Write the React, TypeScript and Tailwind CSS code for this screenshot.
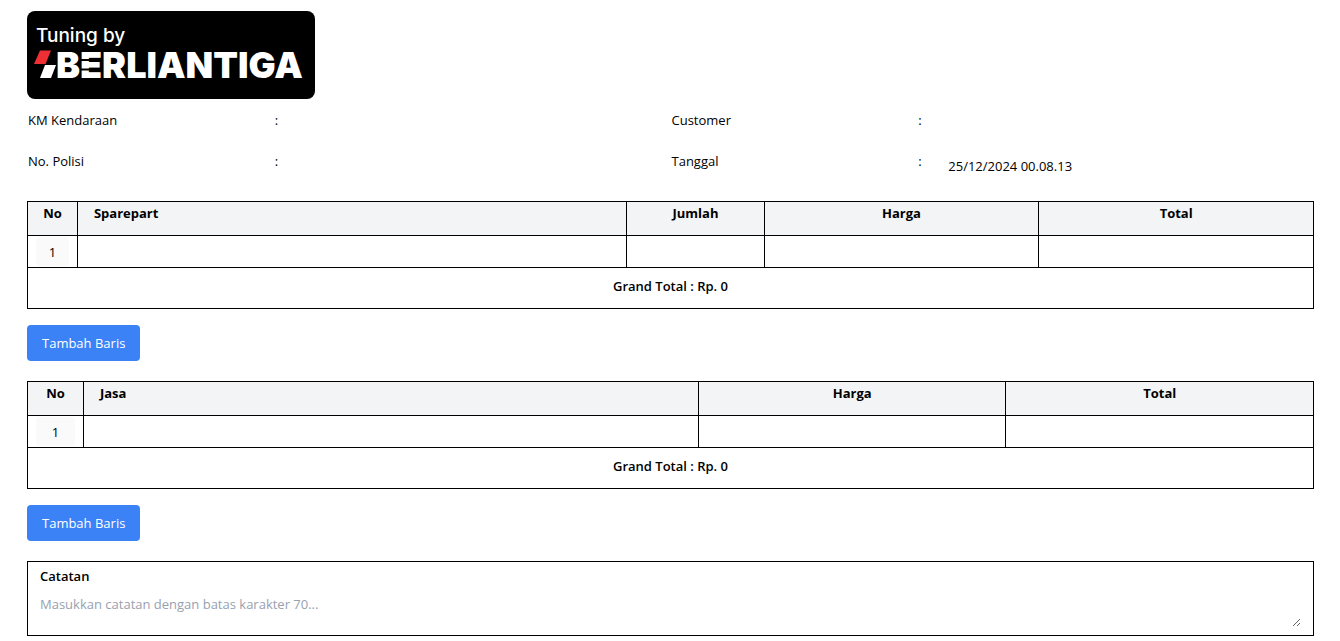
import { useState } from 'react';

type Column = { label: string; width: string; align: string };

const spareparts: Column[] = [
  { label: 'No', width: 'w-4/103', align: 'text-center' },
  { label: 'Sparepart', width: 'w-44/103', align: 'text-left px-4' },
  { label: 'Jumlah', width: 'w-11/103', align: 'text-center' },
  { label: 'Harga', width: 'w-22/103', align: 'text-center' },
  { label: 'Total', width: 'w-22/103', align: 'text-center' },
];

const services: Column[] = [
  { label: 'No', width: 'w-4/92', align: 'text-center' },
  { label: 'Jasa', width: 'w-44/92', align: 'text-left px-4' },
  { label: 'Harga', width: 'w-22/92', align: 'text-center' },
  { label: 'Total', width: 'w-22/92', align: 'text-center' },
];

function Logo() {
  return (
    <svg
      className="block h-[88px] w-[288px] rounded-lg bg-black"
      viewBox="0 0 288 88"
      role="img"
      aria-label="Tuning by Berliantiga"
    >
      <text x="9" y="31" fill="#fff" className="font-['Inter'] text-[19px] font-medium">
        Tuning by
      </text>
      <path d="M13 39.500h11l-5.500 13.500H7z" fill="#ee3035" />
      <path d="M18 54h11l-5 13H13z" fill="#fff" />
      <text x="29" y="67" fill="#fff" className="font-['Inter'] text-[36px] font-black">
        BERLIANTIGA
      </text>
      <path d="M53 48h10v2H53zM53 57.500h10v2H53z" fill="#000" />
    </svg>
  );
}

function Field({ id, label, value = '' }: { id: string; label: string; value?: string }) {
  return (
    <div className="grid h-[41px] grid-cols-[248fr_29fr_367fr] items-start">
      <label htmlFor={id} className="pl-px">{label}</label>
      <span>:</span>
      <input id={id} defaultValue={value} className="mt-[3px] h-6 w-full min-w-0 bg-transparent pl-px outline-none" />
    </div>
  );
}

function ItemTable({ columns }: { columns: Column[] }) {
  const [rows, setRows] = useState(1);
  return (
    <section>
      <table className="w-full table-fixed border-collapse border border-black">
        <thead>
          <tr className="h-[34px] bg-gray-100">
            {columns.map((c) => (
              <th key={c.label} className={`border border-black pt-px align-top font-bold ${c.width} ${c.align}`}>
                {c.label}
              </th>
            ))}
          </tr>
        </thead>
        <tbody>
          {Array.from({ length: rows }, (_, row) => (
            <tr key={row} className="h-8">
              {columns.map((c, i) => (
                <td key={c.label} className="border border-black px-2 py-px">
                  <input
                    aria-label={`${c.label} ${row + 1}`}
                    disabled={i === 0}
                    defaultValue={i === 0 ? row + 1 : ''}
                    className="block h-[29px] w-full rounded bg-transparent text-center outline-none disabled:bg-neutral-50"
                  />
                </td>
              ))}
            </tr>
          ))}
          <tr className="h-[41px]">
            <td colSpan={columns.length} className="border border-black pb-1 text-center font-semibold">
              Grand Total : Rp. 0
            </td>
          </tr>
        </tbody>
      </table>
      <button
        type="button"
        onClick={() => setRows(rows + 1)}
        className="mt-4 mb-5 block h-9 rounded bg-[#3b82f6] px-[15px] text-white"
      >
        Tambah Baris
      </button>
    </section>
  );
}

export default function App() {
  return (
    <main className="bg-white pt-[11px] pr-[26px] pb-[5px] pl-[27px] font-['Open_Sans','Noto_Sans',sans-serif] text-[13px] leading-5 text-black">
      <Logo />
      <div className="mt-[11px] mb-[9px] grid grid-cols-2">
        <Field id="km" label="KM Kendaraan" />
        <Field id="customer" label="Customer" />
        <Field id="polisi" label="No. Polisi" />
        <Field id="tanggal" label="Tanggal" value="25/12/2024 00.08.13" />
      </div>
      <ItemTable columns={spareparts} />
      <ItemTable columns={services} />
      <div className="border border-black px-3 pt-1 pb-2">
        <label htmlFor="catatan" className="block font-semibold">Catatan</label>
        <textarea
          id="catatan"
          maxLength={70}
          placeholder="Masukkan catatan dengan batas karakter 70..."
          className="mt-2 block h-[33px] w-full resize outline-none placeholder:text-gray-400"
        />
      </div>
    </main>
  );
}
